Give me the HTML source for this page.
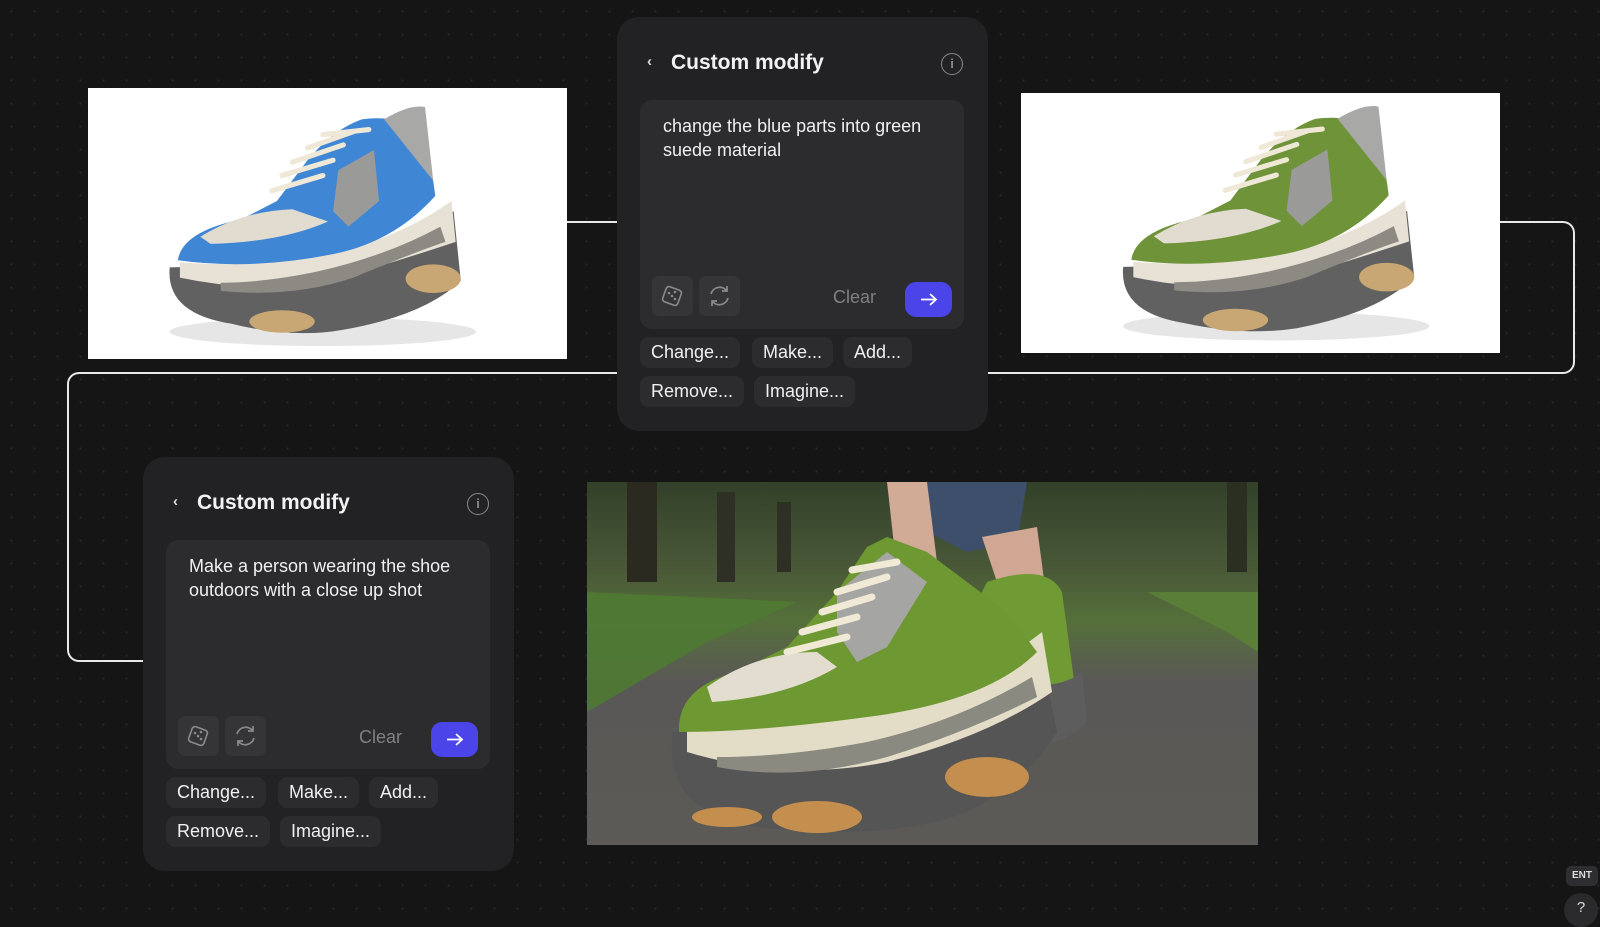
<!DOCTYPE html>
<html><head><meta charset="utf-8">
<style>
*{margin:0;padding:0;box-sizing:border-box}
body{width:1600px;height:914px;overflow:hidden;background:#151515;background-image:radial-gradient(circle,#262626 1px,transparent 1.3px);background-size:23px 23px;font-family:"Liberation Sans",Arial,sans-serif;position:relative}
.abs{position:absolute}
.line{position:absolute;border-color:#e8e8e8;border-style:solid;border-width:0}
.panel{position:absolute;width:371px;height:414px;background:#222224;border-radius:22px}
.panel .hdr{position:absolute;left:54px;top:34px;font-size:21px;font-weight:bold;color:#f2f2f2}
.panel .chev{position:absolute;left:30px;top:36px;color:#ddd;font-size:15px;font-weight:bold}
.panel .info{position:absolute;left:324px;top:36px;width:22px;height:22px;border:1.6px solid #8a8a8a;border-radius:50%;color:#8a8a8a;font-size:13px;text-align:center;line-height:19px;font-weight:bold}
.ta{position:absolute;left:23px;top:83px;width:324px;height:229px;background:#2c2c2f;border-radius:12px}
.ta .txt{position:absolute;left:23px;top:15px;width:290px;font-size:18px;line-height:23.5px;color:#f0f0f0}
.ib{position:absolute;top:176px;width:41px;height:40px;background:#353538;border-radius:7px}
.clear{position:absolute;left:193px;top:187px;font-size:18px;color:#808080}
.go{position:absolute;left:265px;top:182px;width:47px;height:35px;background:#4b44e8;border-radius:11px}
.chip{position:absolute;height:31px;background:#2c2c2f;border-radius:9px;color:#f0f0f0;font-size:18px;line-height:31px;padding:0 11px}
</style></head><body>

<!-- connectors -->
<div class="line" style="left:567px;top:221px;width:50px;border-top-width:2px"></div>
<div class="line" style="left:1500px;top:221px;width:75px;height:153px;border-top-width:2px;border-right-width:2px;border-bottom-width:2px;border-radius:0 12px 12px 0"></div>
<div class="line" style="left:988px;top:372px;width:514px;border-top-width:2px"></div>
<div class="line" style="left:79px;top:372px;width:539px;border-top-width:2px"></div>
<div class="line" style="left:67px;top:372px;width:76px;height:290px;border-top-width:2px;border-left-width:2px;border-bottom-width:2px;border-radius:12px 0 0 12px"></div>

<!-- image 1 -->
<div class="abs" style="left:88px;top:88px;width:479px;height:271px;background:#fff;overflow:hidden">
<svg width="479" height="271" viewBox="0 0 469 264">
<ellipse cx="230" cy="238" rx="150" ry="14" fill="#e6e6e6"/>
<path d="M80,175 Q76,220 140,230 Q200,245 250,236 Q330,222 365,188 L358,120 Q290,170 200,172 Z" fill="#616161"/>
<ellipse cx="190" cy="228" rx="32" ry="11" fill="#c9a774"/><ellipse cx="338" cy="186" rx="27" ry="14" fill="#c9a774"/>
<path d="M90,185 Q160,200 230,190 Q300,170 360,150 L356,110 Q300,150 220,165 Q150,175 90,170Z" fill="#e8e2d6"/>
<path d="M130,198 Q200,205 260,185 Q320,160 350,150 L345,135 Q290,165 220,180 Q170,190 130,190Z" fill="#8d8a84"/>
<path d="M88,168 Q92,140 150,128 L185,110 L215,70 Q240,40 268,30 Q300,26 320,38 Q335,60 340,105 Q300,150 240,162 Q160,178 88,168Z" fill="#3f86d4"/>
<path d="M110,145 Q150,120 200,118 L235,130 Q190,150 120,152Z" fill="#e1dccf"/>
<path d="M245,80 L280,60 L285,110 L255,135 L240,120Z" fill="#9a9a98"/>
<path d="M290,30 Q315,15 330,18 L338,90 L318,65Z" fill="#a8a8a6"/>
<g stroke="#efe8d6" stroke-width="5" fill="none" stroke-linecap="round"><path d="M180,100 L230,85"/><path d="M190,85 L240,70"/><path d="M200,72 L250,55"/><path d="M215,58 L260,42"/><path d="M230,45 L275,40"/></g>
</svg></div>

<!-- image 2 -->
<div class="abs" style="left:1021px;top:93px;width:479px;height:260px;background:#fff;overflow:hidden">
<svg width="479" height="260" viewBox="-20 0 469 254">
<ellipse cx="230" cy="228" rx="150" ry="14" fill="#e6e6e6"/>
<path d="M80,170 Q76,215 140,225 Q200,238 250,230 Q330,215 365,180 L358,115 Q290,165 200,167 Z" fill="#616161"/>
<ellipse cx="190" cy="222" rx="32" ry="11" fill="#c9a774"/><ellipse cx="338" cy="180" rx="27" ry="14" fill="#c9a774"/>
<path d="M90,180 Q160,195 230,185 Q300,165 360,145 L356,105 Q300,145 220,160 Q150,170 90,165Z" fill="#e8e2d6"/>
<path d="M130,193 Q200,200 260,180 Q320,155 350,145 L345,130 Q290,160 220,175 Q170,185 130,185Z" fill="#8d8a84"/>
<path d="M88,163 Q92,135 150,123 L185,105 L215,65 Q240,35 268,25 Q300,21 320,33 Q335,55 340,100 Q300,145 240,157 Q160,173 88,163Z" fill="#6e9338"/>
<path d="M110,140 Q150,115 200,113 L235,125 Q190,145 120,147Z" fill="#e1dccf"/>
<path d="M245,75 L280,55 L285,105 L255,130 L240,115Z" fill="#9a9a98"/>
<path d="M290,25 Q315,10 330,13 L338,85 L318,60Z" fill="#a8a8a6"/>
<g stroke="#efe8d6" stroke-width="5" fill="none" stroke-linecap="round"><path d="M180,95 L230,80"/><path d="M190,80 L240,65"/><path d="M200,67 L250,50"/><path d="M215,53 L260,37"/><path d="M230,40 L275,35"/></g>
</svg></div>

<!-- photo -->
<div class="abs" style="left:587px;top:482px;width:671px;height:363px;overflow:hidden;background:linear-gradient(180deg,#33402a 0%,#4a5a38 25%,#55703a 38%,#5a5856 55%,#5c5a57 100%)">
<svg width="671" height="363" viewBox="0 0 671 363">
<path d="M0,110 L0,230 L120,160 L210,120 L0,110Z" fill="#4f7a33" opacity=".9"/>
<path d="M560,110 L671,110 L671,170 L640,150Z" fill="#5a7d38"/>
<rect x="40" y="0" width="30" height="100" fill="#2a2a20"/><rect x="130" y="10" width="18" height="90" fill="#2e3026"/><rect x="190" y="20" width="14" height="70" fill="#2e3026"/>
<rect x="640" y="0" width="20" height="90" fill="#2a2f22"/>
<path d="M300,0 L440,0 L430,60 L380,70 L320,40Z" fill="#3d4f6b"/>
<path d="M300,0 L340,0 L350,80 L310,90Z" fill="#d2ab96"/>
<path d="M395,55 L450,45 L460,120 L420,130Z" fill="#cfa792"/>
<path d="M400,100 Q460,80 475,110 L490,220 Q470,250 420,250 L390,120Z" fill="#6f9a34"/>
<path d="M420,200 Q470,210 495,190 L500,240 Q470,270 430,260Z" fill="#5d5d5d"/>
<path d="M85,260 Q80,330 170,345 Q300,360 380,330 Q440,300 470,250 L460,200 Q380,250 250,245 Q150,240 85,250Z" fill="#555"/>
<ellipse cx="230" cy="335" rx="45" ry="16" fill="#c48f4e"/><ellipse cx="400" cy="295" rx="42" ry="20" fill="#c48f4e"/><ellipse cx="140" cy="335" rx="35" ry="10" fill="#c48f4e"/>
<path d="M100,270 Q200,300 300,280 Q400,255 465,210 L455,150 Q380,210 260,225 Q160,235 100,240Z" fill="#e3dcc7"/>
<path d="M130,285 Q210,300 300,275 Q380,250 450,215 L445,195 Q370,240 280,260 Q200,275 130,275Z" fill="#8a8a80"/>
<path d="M92,250 Q90,205 150,190 L200,165 L250,110 L280,65 L300,55 L340,70 L380,100 L420,130 L450,170 Q400,220 280,235 Q170,250 92,250Z" fill="#6e9832"/>
<path d="M120,205 Q170,170 230,170 L250,185 Q200,215 125,220Z" fill="#e3ddd0"/>
<path d="M250,110 L300,70 L340,100 L300,165 L270,180 L250,150Z" fill="#a5a5a3"/>
<g stroke="#f0e9d6" stroke-width="7" fill="none" stroke-linecap="round"><path d="M200,170 L260,155"/><path d="M215,150 L270,135"/><path d="M235,130 L285,115"/><path d="M250,110 L300,95"/><path d="M265,88 L310,80"/></g>
</svg></div>

<!-- panel 1 -->
<div class="panel" style="left:617px;top:17px">
<div class="chev">‹</div><div class="hdr">Custom modify</div><div class="info">i</div>
<div class="ta"><div class="txt">change the blue parts into green suede material</div>
<div class="ib" style="left:12px"><svg width="41" height="40"><rect x="12" y="12" width="16" height="16" rx="3" transform="rotate(20 20 20)" fill="none" stroke="#8a8a8a" stroke-width="1.6"/><circle cx="17" cy="17" r="1.3" fill="#8a8a8a"/><circle cx="20" cy="20" r="1.3" fill="#8a8a8a"/><circle cx="23" cy="23" r="1.3" fill="#8a8a8a"/><circle cx="23" cy="16" r="1.3" fill="#8a8a8a"/></svg></div>
<div class="ib" style="left:59px"><svg width="41" height="40"><path d="M12,18 A9,9 0 0 1 28,15 M28,10 L28,15 L23,15 M29,22 A9,9 0 0 1 13,25 M13,30 L13,25 L18,25" fill="none" stroke="#8a8a8a" stroke-width="1.7"/></svg></div>
<div class="clear">Clear</div>
<div class="go"><svg width="47" height="35"><path d="M16,17.5 H31 M25,12 L31,17.5 L25,23" fill="none" stroke="#fff" stroke-width="1.8"/></svg></div>
</div>
<div class="chip" style="left:23px;top:320px">Change...</div>
<div class="chip" style="left:135px;top:320px">Make...</div>
<div class="chip" style="left:226px;top:320px">Add...</div>
<div class="chip" style="left:23px;top:359px">Remove...</div>
<div class="chip" style="left:137px;top:359px">Imagine...</div>
</div>

<!-- panel 2 -->
<div class="panel" style="left:143px;top:457px">
<div class="chev">‹</div><div class="hdr">Custom modify</div><div class="info">i</div>
<div class="ta"><div class="txt">Make a person wearing the shoe outdoors with a close up shot</div>
<div class="ib" style="left:12px"><svg width="41" height="40"><rect x="12" y="12" width="16" height="16" rx="3" transform="rotate(20 20 20)" fill="none" stroke="#8a8a8a" stroke-width="1.6"/><circle cx="17" cy="17" r="1.3" fill="#8a8a8a"/><circle cx="20" cy="20" r="1.3" fill="#8a8a8a"/><circle cx="23" cy="23" r="1.3" fill="#8a8a8a"/><circle cx="23" cy="16" r="1.3" fill="#8a8a8a"/></svg></div>
<div class="ib" style="left:59px"><svg width="41" height="40"><path d="M12,18 A9,9 0 0 1 28,15 M28,10 L28,15 L23,15 M29,22 A9,9 0 0 1 13,25 M13,30 L13,25 L18,25" fill="none" stroke="#8a8a8a" stroke-width="1.7"/></svg></div>
<div class="clear">Clear</div>
<div class="go"><svg width="47" height="35"><path d="M16,17.5 H31 M25,12 L31,17.5 L25,23" fill="none" stroke="#fff" stroke-width="1.8"/></svg></div>
</div>
<div class="chip" style="left:23px;top:320px">Change...</div>
<div class="chip" style="left:135px;top:320px">Make...</div>
<div class="chip" style="left:226px;top:320px">Add...</div>
<div class="chip" style="left:23px;top:359px">Remove...</div>
<div class="chip" style="left:137px;top:359px">Imagine...</div>
</div>

<div class="abs" style="left:1566px;top:866px;width:32px;height:20px;background:#2e2e30;border-radius:5px;color:#ddd;font-size:10px;font-weight:bold;text-align:center;line-height:20px">ENT</div>
<div class="abs" style="left:1564px;top:893px;width:34px;height:34px;background:#2a2a2c;border-radius:50%;color:#ddd;font-size:15px;text-align:center;line-height:30px">?</div>
</body></html>
